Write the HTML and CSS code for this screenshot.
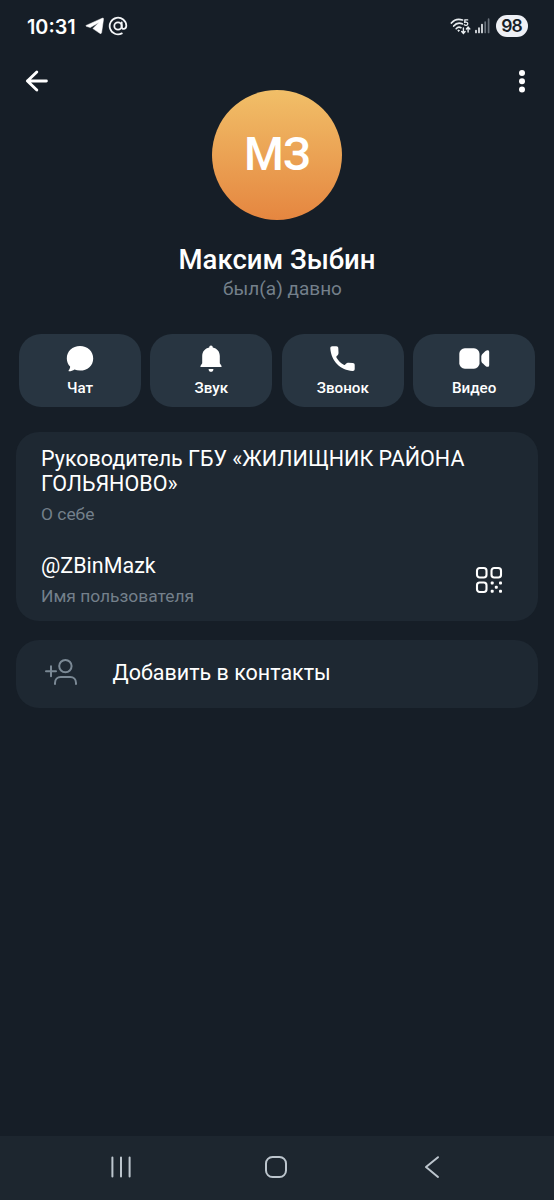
FILE: index.html
```html
<!DOCTYPE html>
<html lang="ru">
<head>
<meta charset="utf-8">
<title>Максим Зыбин</title>
<link rel="stylesheet" href="styles.css">
</head>
<body>
<div class="screen">
  <header class="status">
    <span class="time">10:31</span>
    <svg class="tg" width="20" height="18" viewBox="0 0 20 18"><path d="M1.2 8.4 17.2 1.2Q18.7.7 18.5 2.3L16.6 15.600Q16.300 17.300 14.800 16.300L7.900 11.600 13.900 5.500 5.300 10.500 1.300 9.300Q.400 8.900 1.200 8.400Z" fill="#fff" stroke="#fff" stroke-width=".5" stroke-linejoin="round"/></svg>
    <svg class="at" width="20" height="20" viewBox="0 0 20 20" fill="none" stroke="#f4f6f8" stroke-width="1.8" stroke-linecap="round"><circle cx="10" cy="10" r="3.7"/><path d="M13.700 6.500v4.300c0 3.100 4.600 2.700 4.600-1.100A8.300 8.300 0 1 0 13.800 17.400"/></svg>
    <span class="spacer"></span>
    <svg class="wifi" width="21" height="17" viewBox="0 0 21 17" fill="none" stroke="#e8ecef" stroke-width="1.700" stroke-linecap="round"><path d="M1.400 5C4.300 1.600 8.700.700 12.500 2"/><path d="M3.700 8C6 5.200 9.200 4.500 12.300 5.800"/><path d="M6.200 10.700C7.500 9.100 9.300 8.800 11 9.700"/><circle cx="8.500" cy="12.700" r=".6" fill="#e8ecef" stroke-width="1"/><path d="M17.700 1.900H14.900L14.700 4.400C17 3.700 18 4.900 17.700 6.100 17.400 7.600 15.300 7.700 14.300 6.800" stroke-width="1.300"/><path d="M13.400 10v5M11.700 13.500l1.700 1.900 1.700-1.900M18.100 14V9.500M16.400 11l1.700-1.900 1.700 1.900" stroke-width="1.400"/></svg>
    <svg class="signal" width="15" height="16" viewBox="0 0 15 16" stroke-width="1.700" stroke-linecap="round" stroke="#e8ecef"><path d="M1 12.500v2M4 10v4.500M7 6.500v8"/><path d="M10.200 4v10.500M13.600 1.200v13.300" stroke="#69717a"/></svg>
    <span class="battery">98</span>
  </header>
  <nav class="toolbar">
    <svg width="24" height="24" viewBox="0 0 24 24" fill="none" stroke="#fff" stroke-width="2.900" stroke-linecap="round" stroke-linejoin="round"><path d="M21.400 12H2.400M11.800 3 2.400 12l9.400 9"/></svg>
    <svg width="8" height="24" viewBox="0 0 8 24" fill="#fff"><circle cx="4" cy="4" r="3"/><circle cx="4" cy="12.200" r="3"/><circle cx="4" cy="20.400" r="3"/></svg>
  </nav>
  <section class="profile">
    <div class="avatar"><span class="initials">МЗ</span></div>
    <h1 class="name">Максим Зыбин</h1>
    <p class="seen">был(а) давно</p>
  </section>
  <section class="actions">
    <button class="action"><svg width="32" height="30" viewBox="0 0 32 30" fill="#fff"><path d="M16 3c7.500 0 13.200 5.300 13.200 12.400S23.500 27.600 16 27.600c-2 0-3.900-.400-5.500-1.100-1.500 1.100-3.600 1.800-5.300 1.800-.700 0-.8-.5-.4-1 1-1.200 1.400-2.700 1.300-3.800C4.100 21.400 2.800 18.600 2.800 15.400 2.800 8.300 8.500 3 16 3Z"/></svg><span class="label">Чат</span></button>
    <button class="action"><svg width="32" height="30" viewBox="0 0 32 30" fill="#fff"><path d="M16 2.400c1.200 0 1.700.8 1.800 2 4.200.9 7 4 7 8.600v7.300l1.500 2.100c.6 1 .4 1.700-.8 1.700H6.500c-1.200 0-1.400-.7-.8-1.700l1.500-2.100V13c0-4.600 2.800-7.700 7-8.600.1-1.200.6-2 1.800-2Z"/><path d="M13.600 25.900h4.800a2.400 2.800 0 0 1-4.800 0Z"/></svg><span class="label">Звук</span></button>
    <button class="action"><svg width="32" height="30" viewBox="0 0 32 30" fill="#fff"><path d="M5.300 3.300h4c1.300 0 1.900.7 2 1.900l.2 4.600c0 1.400-.5 2.200-1.500 3-.8.700-.8 1.300-.3 2.100 1.800 2.900 4.200 5.200 7.100 6.800.7.400 1.200.2 1.700-.4.800-1 1.700-1.500 3-1.500l4.200.2c1.300.1 2 .8 2 2v4c0 1.300-.8 2.100-2.100 2C13.600 27.400 4.200 18 3.300 5.500 3.200 4.100 4 3.300 5.300 3.300Z"/></svg><span class="label">Звонок</span></button>
    <button class="action"><svg width="32" height="30" viewBox="0 0 32 30" fill="#fff"><rect x="1.300" y="5.300" width="20.200" height="20.400" rx="5.500"/><path d="M23.300 13.800c0-1.500.5-2.400 1.600-3.400l2.600-2.300c1.700-1.500 3.700-1.200 3.700.9v13c0 2.100-2 2.400-3.700.9l-2.600-2.300c-1.100-1-1.600-1.900-1.600-3.400Z"/></svg><span class="label">Видео</span></button>
  </section>
  <section class="card info">
    <p class="value bio">Руководитель ГБУ «ЖИЛИЩНИК РАЙОНА<br>ГОЛЬЯНОВО»</p>
    <p class="caption about">О себе</p>
    <div class="user">
      <div>
        <p class="value handle">@ZBinMazk</p>
        <p class="caption username">Имя пользователя</p>
      </div>
      <svg class="qr" width="28" height="28" viewBox="0 0 28 28"><g fill="none" stroke="#fff" stroke-width="2.100"><rect x="2" y="2" width="9.500" height="9.500" rx="2.700"/><rect x="16.500" y="2" width="9.500" height="9.500" rx="2.700"/><rect x="2" y="16.500" width="9.500" height="9.500" rx="2.700"/></g><g fill="#fff"><rect x="15.700" y="15.600" width="3" height="3" rx="1"/><rect x="24" y="15.600" width="3" height="3" rx="1"/><rect x="19.800" y="19.700" width="3" height="3" rx="1"/><rect x="15.700" y="23.800" width="3" height="3" rx="1"/><rect x="24" y="23.800" width="3" height="3" rx="1"/></g></svg>
    </div>
  </section>
  <section class="card add">
    <svg width="34" height="28" viewBox="0 0 34 28" fill="none" stroke="#7b8995" stroke-width="2" stroke-linecap="round"><circle cx="21.400" cy="8.100" r="6.200"/><path d="M2 13.300h10M7 8.300v10"/><path d="M11 26v-1c0-3.500 2.300-6 5.800-6h9.400c3.500 0 5.800 2.500 5.800 6v1"/></svg>
    <span class="value contact">Добавить в контакты</span>
  </section>
  <footer class="navbar">
    <svg width="22" height="24" viewBox="0 0 22 24" stroke="#bcc5cd" stroke-width="2" stroke-linecap="round"><path d="M2.400 2.600v18.800M11 2.600v18.800M19.600 2.600v18.800"/></svg>
    <svg class="home" width="24" height="24" viewBox="0 0 24 24" fill="none" stroke="#bcc5cd" stroke-width="2"><rect x="2" y="2" width="20" height="20" rx="6.500"/></svg>
    <svg width="16" height="24" viewBox="0 0 16 24" fill="none" stroke="#bcc5cd" stroke-width="2" stroke-linecap="round" stroke-linejoin="round"><path d="M14 2.200 2 12l12 9.900"/></svg>
  </footer>
</div>
</body>
</html>
```
FILE: styles.css
```css
* { box-sizing: border-box; }
body { margin: 0; background: #161e27; }
p, h1 { margin: 0; }
svg { display: block; flex: none; }
.screen { width: 554px; height: 1200px; display: flex; flex-direction: column; background: #161e27; color: #fff; font-family: Roboto, "Noto Sans", sans-serif; white-space: nowrap; }
.status { height: 52px; display: flex; align-items: center; padding: 0 26px 0 27px; font-family: Inter, sans-serif; }
.time { width: 58px; padding-top: 1px; font-size: 19.800px; font-weight: 600; line-height: 24px; letter-spacing: 0; }
.at { margin-left: 3px; }
.spacer { flex: 1; }
.signal { margin: 0 6px 0 4px; }
.battery { width: 32px; height: 22px; border-radius: 11px; background: #eef0f5; color: #161e27; font-size: 17.500px; line-height: 22px; font-weight: 600; letter-spacing: -.8px; text-indent: -.8px; text-align: center; }
.toolbar { height: 38px; display: flex; align-items: center; justify-content: space-between; padding: 20px 28px 0 25px; }
.profile { height: 244px; display: flex; flex-direction: column; align-items: center; }
.avatar { width: 130px; height: 130px; border-radius: 50%; background: linear-gradient(#f1bf68, #e58640); display: flex; align-items: center; justify-content: center; }
.initials { font-size: 45.500px; font-weight: 500; line-height: 54px; letter-spacing: -.8px; }
.name { margin-top: 24px; font-size: 27.500px; font-weight: 500; line-height: 32px; }
.seen { margin: 1px 0 0 11px; font-size: 19px; line-height: 24px; color: #74808b; }
.actions { display: grid; grid-template-columns: repeat(4, 122px); gap: 9.400px; padding-left: 19px; }
.action { height: 73px; border: 0; border-radius: 22px; padding: 9px 0 0; background: #283541; color: #fff; font-family: inherit; display: flex; flex-direction: column; align-items: center; }
.label { margin-top: 6px; font-size: 15.200px; font-weight: 500; line-height: 18px; }
.card { margin: 0 16.500px 0 16px; border-radius: 23px; background: #1e2832; }
.info { height: 189px; margin-top: 25px; padding: 14px 34.500px 0 25px; }
.value { font-size: 21.500px; line-height: 25px; }
.caption { font-size: 17.400px; line-height: 20px; color: #74808b; }
.about { margin-top: 8px; }
.user { display: flex; justify-content: space-between; align-items: center; margin-top: 29px; }
.username { margin-top: 8px; }
.add { height: 68px; margin-top: 19px; padding: 0 0 4px 28px; display: flex; align-items: center; gap: 34.500px; }
.navbar { height: 64px; margin-top: auto; padding: 0 114px 2px 110px; display: flex; align-items: center; justify-content: space-between; background: #1d262f; }
.home { margin-right: 4px; }
```
